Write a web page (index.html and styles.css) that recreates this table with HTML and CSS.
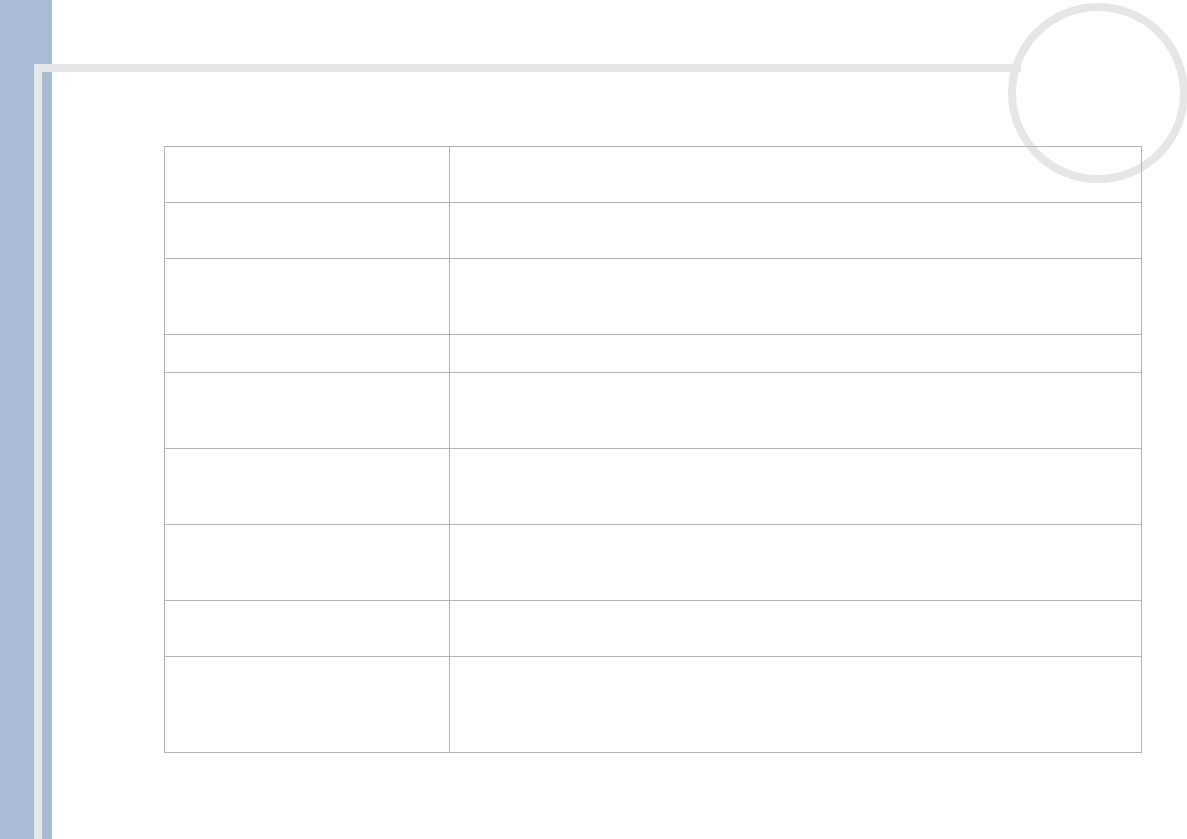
FILE: index.html
```html
<!DOCTYPE html>
<html>
<head>
<meta charset="utf-8">
<link rel="stylesheet" href="styles.css">
</head>
<body>
<div class="page">
  <aside class="sidebar"></aside>
  <main class="content">
    <div class="grid-table">
      <div class="cell"></div><div class="cell"></div>
      <div class="cell"></div><div class="cell"></div>
      <div class="cell"></div><div class="cell"></div>
      <div class="cell"></div><div class="cell"></div>
      <div class="cell"></div><div class="cell"></div>
      <div class="cell"></div><div class="cell"></div>
      <div class="cell"></div><div class="cell"></div>
      <div class="cell"></div><div class="cell"></div>
      <div class="cell"></div><div class="cell"></div>
    </div>
  </main>
  <div class="frame"></div>
  <div class="ring"></div>
</div>
</body>
</html>
```
FILE: styles.css
```css
html, body {
  margin: 0;
  padding: 0;
  background: #ffffff;
  font-family: "Liberation Sans", Arial, sans-serif;
}
.page {
  position: relative;
  display: flex;
  width: 1187px;
  height: 839px;
  overflow: hidden;
}
.sidebar {
  width: 52px;
  flex: 0 0 52px;
  background: #a8bcd8;
}
.content {
  flex: 1;
  padding-top: 146px;
  padding-left: 112px;
  position: relative;
  z-index: 2;
}
.frame {
  position: absolute;
  left: 34px;
  top: 64px;
  width: 979px;
  height: 800px;
  border-top: 8px solid #e6e6e6;
  border-left: 8px solid #e6e6e6;
  z-index: 1;
}
.ring {
  position: absolute;
  left: 1008px;
  top: 3px;
  width: 180px;
  height: 180px;
  box-sizing: border-box;
  border: 8px solid #e6e6e6;
  border-radius: 50%;
  z-index: 1;
}
.grid-table {
  display: grid;
  grid-template-columns: 285px 692px;
  grid-template-rows: 56px 56px 76px 38px 76px 76px 76px 56px 96px;
  width: 978px;
  box-sizing: border-box;
  border-top: 1px solid #b3b3b3;
  border-left: 1px solid #b3b3b3;
}
.cell {
  box-sizing: border-box;
  border-right: 1px solid #b3b3b3;
  border-bottom: 1px solid #b3b3b3;
}
```
